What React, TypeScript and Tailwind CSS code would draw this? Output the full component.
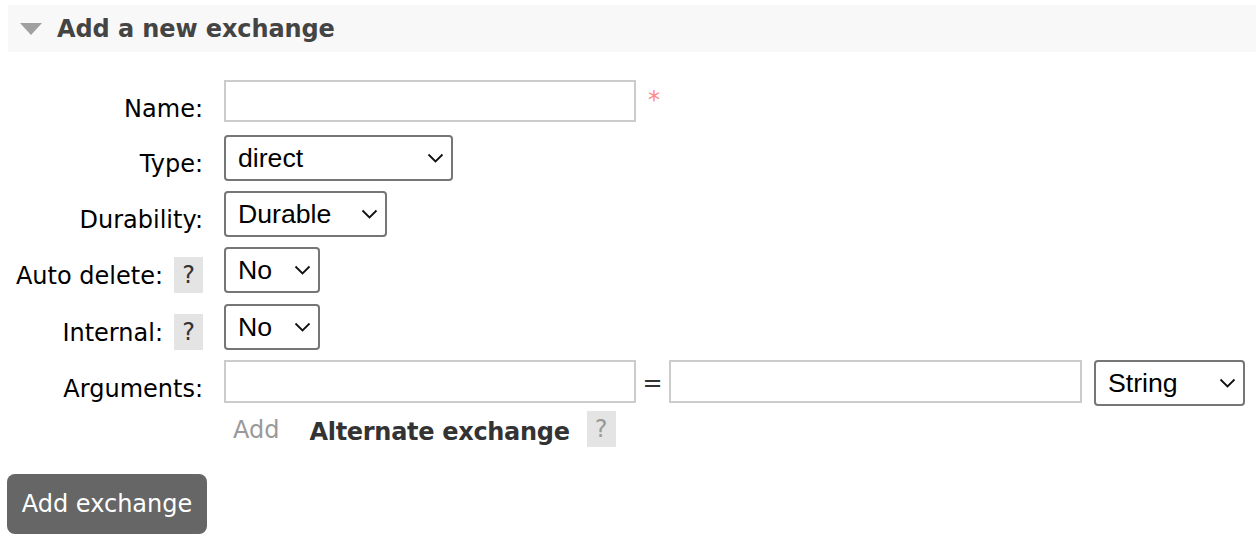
import type { ReactNode } from "react";

const labelFont = "font-['DejaVu_Sans',Verdana,sans-serif]";

function Help({ muted = false }: { muted?: boolean }) {
  return (
    <span
      className={`inline-flex h-[36px] w-[29px] items-center justify-center bg-[#e4e4e4] ${
        muted ? "text-[#999]" : "text-[#333]"
      }`}
    >
      ?
    </span>
  );
}

function Chevron() {
  return (
    <svg
      className="pointer-events-none absolute right-[9px] top-1/2 -translate-y-1/2"
      width="17"
      height="10"
      viewBox="0 0 17 10"
      fill="none"
    >
      <path d="M1.5 1.5 8.5 8.5 15.5 1.5" stroke="#111" strokeWidth="1.8" />
    </svg>
  );
}

function Select({ value, width }: { value: string; width: string }) {
  return (
    <div className={`relative h-[46px] ${width}`}>
      <select
        defaultValue={value}
        className="h-full w-full appearance-none rounded-[4px] border-2 border-[#767676] bg-white pl-[12px] font-['Liberation_Sans',Arial,sans-serif] text-[26.67px] text-black outline-none"
      >
        <option>{value}</option>
      </select>
      <Chevron />
    </div>
  );
}

function Row({
  label,
  help = false,
  height,
  children,
}: {
  label: string;
  help?: boolean;
  height: string;
  children: ReactNode;
}) {
  return (
    <div className={`flex ${height}`}>
      <div className="flex w-[203px] shrink-0 items-start justify-end gap-[11px]">
        <span className="pt-[15px] leading-[28px]">{label}</span>
        {help && (
          <span className="pt-[10px]">
            <Help />
          </span>
        )}
      </div>
      <div className="ml-[21px] flex items-start">{children}</div>
    </div>
  );
}

export default function App() {
  return (
    <div className={`min-h-screen bg-white pt-[5px] text-[24px] text-black ${labelFont}`}>
      <div className="ml-[8px] flex h-[47px] items-center bg-[#f8f8f8]">
        <svg className="ml-[12px]" width="22" height="12" viewBox="0 0 22 12">
          <polygon points="0,0 22,0 11,12" fill="#a0a0a0" />
        </svg>
        <h2 className="ml-[15px] font-bold tracking-[-0.1px] text-[#444]">Add a new exchange</h2>
      </div>

      <div className="mt-[28px]">
        <Row label="Name:" height="h-[55px]">
          <input className="h-[42px] w-[412px] border-2 border-[#ccc] outline-none" />
          <span className="ml-[12px] mt-[2px] text-[#f88]">*</span>
        </Row>
        <Row label="Type:" height="h-[56px]">
          <Select value="direct" width="w-[229px]" />
        </Row>
        <Row label="Durability:" height="h-[56px]">
          <Select value="Durable" width="w-[163px]" />
        </Row>
        <Row label="Auto delete:" help height="h-[57px]">
          <Select value="No" width="w-[96px]" />
        </Row>
        <Row label="Internal:" help height="h-[56px]">
          <Select value="No" width="w-[96px]" />
        </Row>
        <Row label="Arguments:" height="h-[51px]">
          <input className="h-[43px] w-[412px] border-2 border-[#ccc] outline-none" />
          <span className="w-[33px] pt-[5px] text-center text-[#333]">=</span>
          <input className="h-[43px] w-[413px] border-2 border-[#ccc] outline-none" />
          <div className="ml-[12px]">
            <Select value="String" width="w-[151px]" />
          </div>
        </Row>
        <div className="ml-[224px] flex items-start">
          <span className="ml-[9px] mt-[1px] text-[#999]">Add</span>
          <span className="ml-[30px] mt-[3px] font-bold tracking-[-0.3px] text-[#333]">
            Alternate exchange
          </span>
          <span className="ml-[17px]">
            <Help muted />
          </span>
        </div>
      </div>

      <button className="ml-[7px] mt-[24px] h-[60px] w-[200px] rounded-[8px] bg-[#666] text-white">
        Add exchange
      </button>
    </div>
  );
}
